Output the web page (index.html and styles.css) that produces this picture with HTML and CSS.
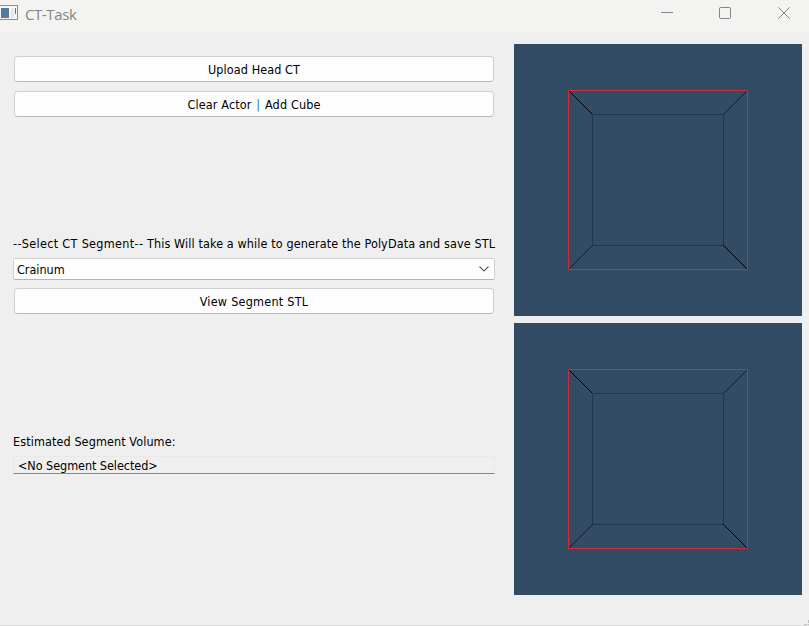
FILE: index.html
```html
<!DOCTYPE html>
<html lang="en">
<head>
<meta charset="utf-8">
<title>CT-Task</title>
<link rel="stylesheet" href="styles.css">
</head>
<body>
<div class="window">
  <header class="titlebar">
    <svg class="app-icon" width="18" height="20" viewBox="0 0 18 20" shape-rendering="crispEdges">
      <path d="M0 0H18V15H0Z" fill="#8b8f93"/>
      <path d="M0 1H17V14H0Z" fill="#f4f6f7"/>
      <path d="M1 3H9V13H1Z" fill="#65798a"/>
      <path d="M2 4H8L2 10Z" fill="#437fae"/>
      <path d="M11 3H14V13H11Z" fill="#e5e9ed"/>
      <path d="M15 3H16V9H15Z" fill="#527996"/>
    </svg>
    <span class="title">CT-Task</span>
    <div class="controls">
      <svg width="12" height="12"><path d="M0 5.5H12" stroke="#858585"/></svg>
      <svg width="12" height="12"><rect x=".5" y=".5" width="11" height="11" rx="1" fill="none" stroke="#858585"/></svg>
      <svg width="12" height="12"><path d="M.3.3L11.7 11.7M11.7.3L.3 11.7" stroke="#858585" fill="none"/></svg>
    </div>
  </header>
  <main class="content">
    <section class="form">
      <button class="push">Upload Head CT</button>
      <button class="push clear"><span>Clear Actor <i class="bar">|</i> Add Cube</span></button>
      <div class="label segment-label"><span class="prompt">--Select CT Segment--</span> This Will take a while to generate the PolyData and save STL</div>
      <div class="combo"><span>Crainum</span>
        <svg width="10" height="6"><path d="M.5.5L5 5L9.5.5" fill="none" stroke="#5e5e6c" stroke-width="1.1"/></svg>
      </div>
      <button class="push view">View Segment STL</button>
      <div class="label volume-label">Estimated Segment Volume:</div>
      <div class="field">&lt;No Segment Selected&gt;</div>
    </section>
    <section class="views">
      <svg class="viewport" width="288" height="272" viewBox="0 0 288 272" shape-rendering="crispEdges" fill="none">
        <rect x="78.5" y="70.5" width="131" height="131" stroke="#22364a"/>
        <path d="M54.5 46.5L78.5 70.5M209.5 201.5L233.5 225.5" stroke="#000"/>
        <path d="M233.5 46.5L209.5 70.5M78.5 201.5L54.5 225.5" stroke="#151d34"/>
        <rect x="54.5" y="46.5" width="179" height="179" stroke="#d12b38"/>
      </svg>
      <svg class="viewport" width="288" height="272" viewBox="0 0 288 272" shape-rendering="crispEdges" fill="none">
        <rect x="78.5" y="70.5" width="131" height="131" stroke="#22364a"/>
        <path d="M54.5 46.5L78.5 70.5M209.5 201.5L233.5 225.5" stroke="#000"/>
        <path d="M233.5 46.5L209.5 70.5M78.5 201.5L54.5 225.5" stroke="#151d34"/>
        <rect x="54.5" y="46.5" width="179" height="179" stroke="#d12b38"/>
      </svg>
    </section>
  </main>
  <svg class="grip" width="5" height="5" shape-rendering="crispEdges"><path d="M4 0H5V3H4ZM0 4H3V5H0ZM4 4H5V5H4Z" fill="#bfbfbf"/></svg>
</div>
</body>
</html>
```

FILE: styles.css
```css
* { box-sizing: border-box; }
body { margin: 0; background: #efefef; font: 12.5px/16px "DejaVu Sans Condensed", "DejaVu Sans", sans-serif; font-stretch: condensed; color: #000; }
.window { position: relative; width: 809px; height: 626px; overflow: hidden; border-bottom: 1px solid #dedede; }
.titlebar { height: 32px; background: #f3f3f1; display: flex; align-items: flex-start; }
.app-icon { margin-top: 5px; }
.title { margin: 4px 0 0 7px; font: 15px/20px "Open Sans", sans-serif; letter-spacing: -0.4px; color: #858585; }
.controls { margin: 7px 19px 0 auto; display: flex; gap: 46px; }
.controls svg:last-child { margin-left: 1px; }
.content { display: flex; justify-content: space-between; padding: 12px 7px 0 13px; }
.form { width: 482px; padding-top: 12px; display: flex; flex-direction: column; }
.push { height: 26px; margin: 0 1px 9px; padding: 2px 0 0; border: 1px solid #d0d0d0; border-bottom-color: #b9b9b9; border-radius: 4px; background: #fdfdfd; font: inherit; color: inherit; letter-spacing: 0.1px; }
.view { letter-spacing: 0.25px; }
.bar { font-style: normal; color: #2878b8; margin: 0 1px; }
.clear { letter-spacing: 0.15px; }
.label { height: 16px; line-height: 18px; white-space: nowrap; letter-spacing: 0.1px; }
.segment-label { margin-top: 109px; letter-spacing: 0.11px; }
.prompt { letter-spacing: 0.33px; }
.combo { height: 22px; margin: 7px 0 8px; border: 1px solid #d0d0d0; border-bottom-color: #b4b4b4; border-radius: 2px; background: #fdfdfd; display: flex; align-items: center; justify-content: space-between; padding: 0 5px 0 3px; }
.combo span { padding-top: 2px; }
.volume-label { margin-top: 110px; }
.field { height: 18px; margin-top: 7px; border: 1px solid #e9e9e9; border-bottom-color: #868686; padding-left: 4px; line-height: 17px; letter-spacing: -0.05px; }
.views { display: flex; flex-direction: column; gap: 7px; }
.viewport { display: block; background: #324c66; }
.grip { position: absolute; right: 0; bottom: 0; }
```
